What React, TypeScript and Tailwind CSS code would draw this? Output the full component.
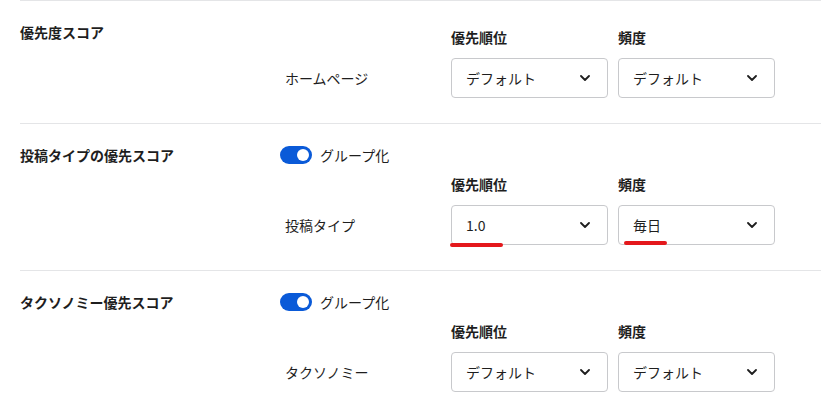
import React from 'react';

const font = { fontFamily: '"Noto Sans CJK JP", "Noto Sans", sans-serif' };

const Chevron = () => (
  <svg width="10" height="6" viewBox="0 0 10 6" fill="none" className="text-[#1e1e1e]">
    <path d="M1 1l4 4 4-4" stroke="currentColor" strokeWidth="1.8" strokeLinecap="round" strokeLinejoin="round" />
  </svg>
);

const Select = ({ value, mark }: { value: string; mark?: 'a' | 'b' }) => (
  <div className="relative h-10 w-[157px] rounded border border-[#c8c9cc] bg-white flex items-center justify-between pl-[14px] pr-[17px]">
    <span className="text-sm leading-5 text-[#1e1e1e]">{value}</span>
    <Chevron />
    {/* red annotation strokes */}
    {mark === 'a' && <span className="absolute left-[-2px] bottom-[-3px] h-[4px] w-[53px] rounded-full bg-[#e4181c]" />}
    {mark === 'b' && <span className="absolute left-[5px] bottom-[-1px] h-[4px] w-[43px] rounded-full bg-[#e4181c]" />}
  </div>
);

const Toggle = () => (
  <div className="flex items-center gap-2 h-5">
    <span className="w-8 h-[18px] rounded-full bg-[#0a5ad8] flex items-center justify-end pr-[3px]">
      <span className="w-3 h-3 rounded-full bg-white" />
    </span>
    <span className="text-sm leading-5 text-[#1e1e1e]">グループ化</span>
  </div>
);

type Row = {
  title: string;
  group: boolean;
  label: string;
  priority: string;
  freq: string;
  marked?: boolean;
};

const rows: Row[] = [
  { title: '優先度スコア', group: false, label: 'ホームページ', priority: 'デフォルト', freq: 'デフォルト' },
  { title: '投稿タイプの優先スコア', group: true, label: '投稿タイプ', priority: '1.0', freq: '毎日', marked: true },
  { title: 'タクソノミー優先スコア', group: true, label: 'タクソノミー', priority: 'デフォルト', freq: 'デフォルト' },
];

const Section = ({ row }: { row: Row }) => (
  <section className="ml-5 border-t border-[#e4e5e7] flex pt-[21px] pb-[25px]">
    <h3 className="w-[260px] text-sm leading-5 font-bold text-[#1e1e1e]">{row.title}</h3>
    <div className="flex flex-col">
      {row.group ? <div className="mb-[9px]"><Toggle /></div> : <div className="h-[5px]" />}
      <div className="grid grid-cols-[161px_157px_157px] gap-x-[10px] gap-y-[11px] items-center">
        <span />
        <span className="text-sm leading-5 font-bold text-[#1e1e1e]">優先順位</span>
        <span className="text-sm leading-5 font-bold text-[#1e1e1e]">頻度</span>
        <span className="pl-[5px] text-sm leading-5 text-[#1e1e1e]">{row.label}</span>
        <Select value={row.priority} mark={row.marked ? 'a' : undefined} />
        <Select value={row.freq} mark={row.marked ? 'b' : undefined} />
      </div>
    </div>
  </section>
);

export default function App() {
  return (
    <div className="w-[821px] h-[408px] bg-white overflow-hidden" style={font}>
      {rows.map((r) => (
        <Section key={r.title} row={r} />
      ))}
    </div>
  );
}
